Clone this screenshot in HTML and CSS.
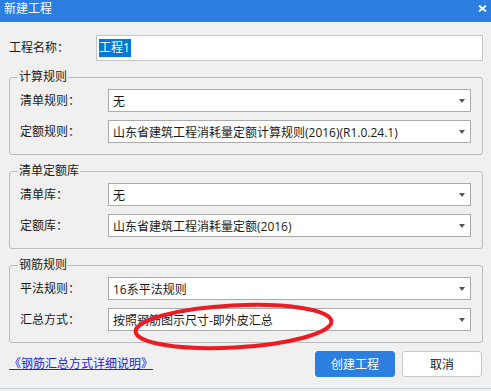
FILE: index.html
```html
<!DOCTYPE html>
<html lang="zh-CN">
<head>
    <meta charset="UTF-8">
    <title>新建工程</title>
    <link rel="stylesheet" href="styles.css">
</head>
<body>
    <div class="dialog">
        <div class="titlebar">
            <span class="title">新建工程</span>
            <svg class="close" width="9" height="7" viewBox="0 0 9 7">
                <path d="M1 0.5 L8 6.5 M8 0.5 L1 6.5" stroke="#fff" stroke-width="1.8" fill="none"/>
            </svg>
        </div>

        <div class="content">
            <div class="name-row">
                <span class="label name-label">工程名称：</span>
                <div class="textbox"><span class="selected">工程1</span></div>
            </div>

            <fieldset class="group">
                <legend>计算规则</legend>
                <div class="row">
                    <span class="label">清单规则：</span>
                    <div class="combo"><span>无</span><i class="arrow"></i></div>
                </div>
                <div class="row">
                    <span class="label">定额规则：</span>
                    <div class="combo"><span>山东省建筑工程消耗量定额计算规则(2016)(R1.0.24.1)</span><i class="arrow"></i></div>
                </div>
            </fieldset>

            <fieldset class="group">
                <legend>清单定额库</legend>
                <div class="row">
                    <span class="label">清单库：</span>
                    <div class="combo"><span>无</span><i class="arrow"></i></div>
                </div>
                <div class="row">
                    <span class="label">定额库：</span>
                    <div class="combo"><span>山东省建筑工程消耗量定额(2016)</span><i class="arrow"></i></div>
                </div>
            </fieldset>

            <fieldset class="group">
                <legend>钢筋规则</legend>
                <div class="row">
                    <span class="label">平法规则：</span>
                    <div class="combo"><span>16系平法规则</span><i class="arrow"></i></div>
                </div>
                <div class="row">
                    <span class="label">汇总方式：</span>
                    <div class="combo"><span>按照钢筋图示尺寸-即外皮汇总</span><i class="arrow"></i></div>
                </div>
            </fieldset>

            <div class="footer">
                <a class="help-link" href="#">《钢筋汇总方式详细说明》</a>
                <div class="buttons">
                    <button type="button" class="btn btn-primary">创建工程</button>
                    <button type="button" class="btn">取消</button>
                </div>
            </div>
        </div>

        <!-- red marker drawn over the screenshot -->
        <svg class="marker" width="491" height="391" viewBox="0 0 491 391">
            <ellipse cx="233.5" cy="326.5" rx="98" ry="21" transform="rotate(-3 233.5 326.5)"
                     fill="none" stroke="#ec1c24" stroke-width="4"/>
        </svg>
    </div>
</body>
</html>
```

FILE: styles.css
```css
html, body {
    margin: 0;
    padding: 0;
}
body {
    width: 491px;
    height: 391px;
    background-color: #f0f0f0;
    font-family: "Open Sans", "Noto Sans CJK SC", sans-serif;
    font-size: 12px;
    color: #1a1a1a;
    overflow: hidden;
}
.dialog {
    position: relative;
    height: 388px;
    border-bottom: 1px solid #c9d1dc;
}
.titlebar {
    height: 22px;
    background-color: #2c7fe0;
    color: #fff;
    display: flex;
    align-items: flex-start;
    justify-content: space-between;
    padding: 0 4px;
}
.title {
    line-height: 18px;
}
.close {
    margin-top: 5px;
}
.content {
    padding: 0 8px 0 9px;
    display: flex;
    flex-direction: column;
}
.name-row {
    display: flex;
    align-items: center;
    margin-top: 13px;
    height: 26px;
}
.name-label {
    width: 87px;
}
.label {
    flex-shrink: 0;
    line-height: 16px;
}
.textbox {
    flex: 1;
    height: 26px;
    box-sizing: border-box;
    border: 1px solid #c6c6c6;
    background-color: #fff;
    padding-left: 2px;
    display: flex;
    align-items: center;
}
.selected {
    background-color: #0078d7;
    color: #fff;
    line-height: 18px;
    padding-right: 1px;
}
.group {
    margin: 8px 0 0 0;
    padding: 4px 11px 11px 10px;
    border: 1px solid #bdbdbd;
    border-radius: 3px;
    min-inline-size: 0;
    display: flex;
    flex-direction: column;
    gap: 8px;
}
.group legend {
    padding: 0 1px;
    margin-left: -2px;
    line-height: 16px;
}
.row {
    display: flex;
    align-items: center;
    height: 23px;
}
.row .label {
    width: 88px;
}
.combo {
    flex: 1;
    height: 23px;
    box-sizing: border-box;
    border: 1px solid #ababab;
    background-color: #fff;
    padding: 0 5px 0 4px;
    display: flex;
    align-items: center;
    justify-content: space-between;
    white-space: nowrap;
}
.arrow {
    width: 0;
    height: 0;
    border-left: 3px solid transparent;
    border-right: 3px solid transparent;
    border-top: 4px solid #555;
}
.footer {
    display: flex;
    align-items: center;
    justify-content: space-between;
    margin-top: 8px;
}
.help-link {
    color: #2323e8;
    text-decoration: underline;
    line-height: 16px;
}
.buttons {
    display: flex;
    gap: 7px;
    padding-right: 1px;
}
.btn {
    width: 80px;
    height: 26px;
    border: 1px solid #c8c8c8;
    border-radius: 3px;
    background-color: #fff;
    color: #1a1a1a;
    font-family: inherit;
    font-size: 12px;
    padding: 0;
}
.btn-primary {
    background-color: #2c7fe0;
    border-color: #2c7fe0;
    color: #fff;
}
.marker {
    position: absolute;
    left: 0;
    top: 0;
    pointer-events: none;
}
```
